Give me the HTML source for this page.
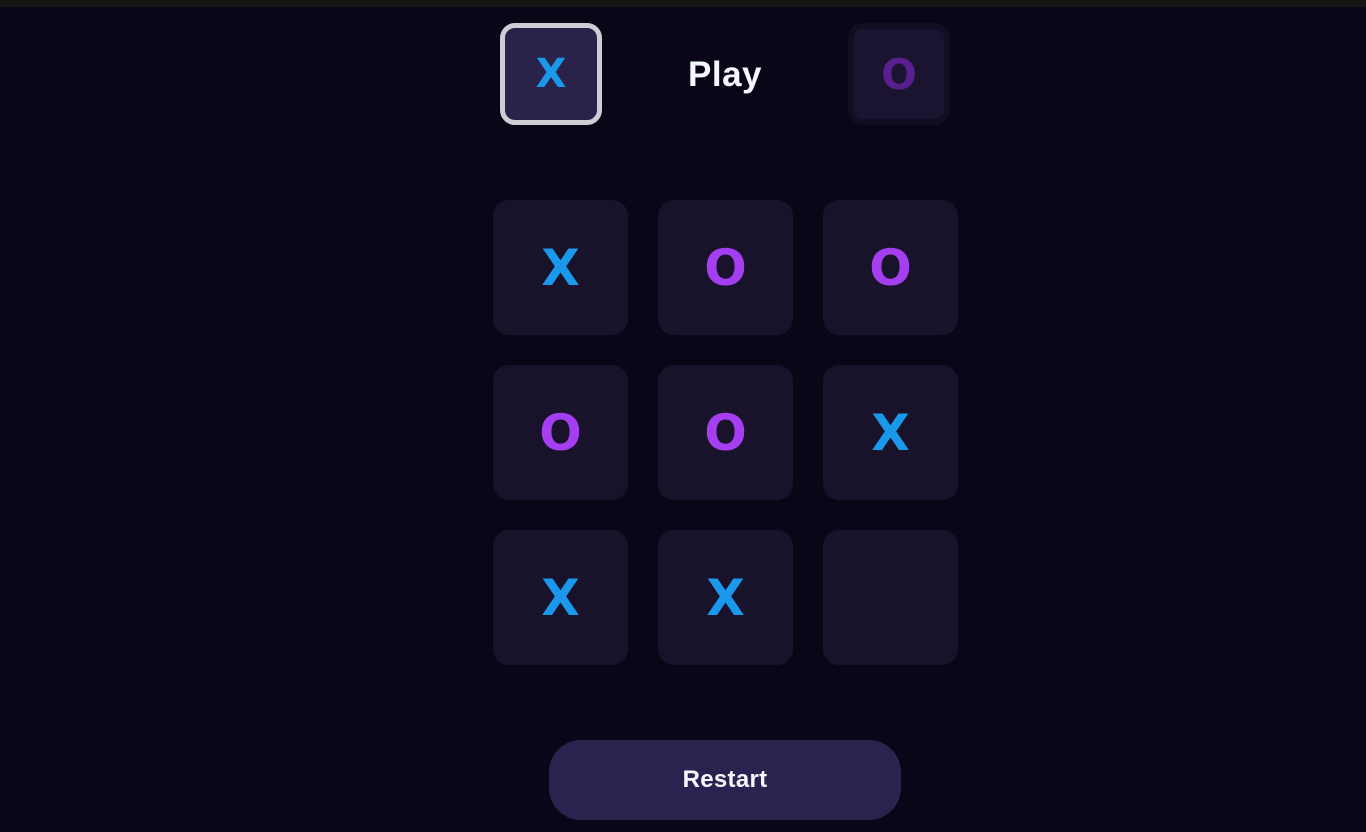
<!DOCTYPE html>
<html><head><meta charset="utf-8"><style>
*{margin:0;padding:0;box-sizing:border-box}
body{width:1366px;height:832px;background:#0a0618;position:relative;overflow:hidden;font-family:"Liberation Sans",sans-serif;font-weight:bold}
.bar{position:absolute;left:0;top:0;width:1366px;height:7px;background:#151515}
.abs{position:absolute;display:flex;align-items:center;justify-content:center}
.cell{width:135px;height:135px;border-radius:16px;background:#18132b;font-size:50px;font-family:"DejaVu Sans",sans-serif}
.x{color:#1a98ec}.o{color:#a53ef0}
</style></head><body>
<div class="bar"></div>
<div class="abs" style="left:500px;top:23px;width:102px;height:102px;border:5px solid #cfccd6;border-radius:15px;background:#2a2249;color:#1a98ec;font-size:40px;font-family:'DejaVu Sans',sans-serif">X</div>
<div class="abs" style="left:640px;top:50px;width:170px;height:50px;color:#f4f8ff;font-size:35px;letter-spacing:0.5px">Play</div>
<div class="abs" style="left:848px;top:23px;width:102px;height:102px;border:6px solid #120e22;border-radius:15px;background:#1a1430;color:#5a1f8f;font-size:42px;font-family:'DejaVu Sans',sans-serif">O</div>

<div class="abs cell x" style="left:493px;top:200px">X</div>
<div class="abs cell o" style="left:658px;top:200px">O</div>
<div class="abs cell o" style="left:823px;top:200px">O</div>
<div class="abs cell o" style="left:493px;top:365px">O</div>
<div class="abs cell o" style="left:658px;top:365px">O</div>
<div class="abs cell x" style="left:823px;top:365px">X</div>
<div class="abs cell x" style="left:493px;top:530px">X</div>
<div class="abs cell x" style="left:658px;top:530px">X</div>
<div class="abs cell" style="left:823px;top:530px"></div>

<div class="abs" style="left:549px;top:740px;width:352px;height:80px;border-radius:32px;background:#2b2250;color:#f4f8ff;font-size:24px;letter-spacing:0.3px">Restart</div>
</body></html>
